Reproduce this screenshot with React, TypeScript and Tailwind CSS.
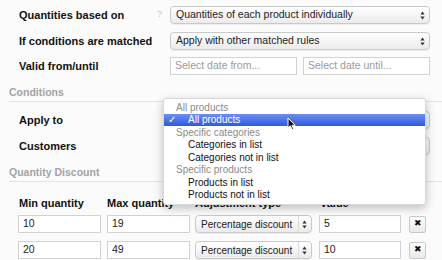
import React from "react";

const font = "font-['Liberation_Sans',Arial,sans-serif]";

const Arrows = () => (
  <svg width="5" height="9" viewBox="0 0 5 9" className="shrink-0">
    <path d="M2.5 0.5 L4.6 3.6 L0.4 3.6 Z" fill="#333" />
    <path d="M2.5 8.5 L4.6 5.4 L0.4 5.4 Z" fill="#333" />
  </svg>
);

const Select = ({ text, className = "", divider = false }: { text: string; className?: string; divider?: boolean }) => (
  <div
    className={`flex items-center h-[18px] rounded-[4px] border border-[#c9c9c9] bg-linear-to-b from-[#ffffff] to-[#ebebeb] shadow-[0_1px_1px_rgba(0,0,0,0.06)] text-[#222] ${className}`}
  >
    <span className="flex-1 pl-[5px] whitespace-nowrap overflow-hidden">{text}</span>
    <span className={`flex items-center justify-center h-full w-[12px] mr-[1px] ${divider ? "border-l border-[#dcdcdc]" : ""}`}>
      <Arrows />
    </span>
  </div>
);

const Input = ({ value, placeholder, className = "" }: { value?: string; placeholder?: string; className?: string }) => (
  <div
    className={`flex items-center h-[18px] border border-[#d2d2d2] bg-white pl-[4px] text-[10.5px] ${value ? "text-[#222]" : "text-[#9a9a9a]"} ${className}`}
  >
    {value ?? placeholder}
  </div>
);

const Label = ({ children }: { children: React.ReactNode }) => (
  <div className="text-[11px] font-bold text-[#111]">{children}</div>
);

const Section = ({ title }: { title: string }) => (
  <div className="ml-[9px] border-b border-[#e3e3e3] pb-[3px] text-[10.5px] leading-[12px] font-bold text-[#a3a3a3]">{title}</div>
);

const FormRow = ({ label, help, children, className = "" }: { label: string; help?: boolean; children: React.ReactNode; className?: string }) => (
  <div className={`grid grid-cols-[134px_17px_260px] items-center pl-[19px] ${className}`}>
    <Label>{label}</Label>
    <span className="text-[9px] text-[#c4c4c4] pl-[4px]">{help ? "?" : ""}</span>
    {children}
  </div>
);

const menuItems: { text: string; kind: "group" | "item" | "active" }[] = [
  { text: "All products", kind: "group" },
  { text: "All products", kind: "active" },
  { text: "Specific categories", kind: "group" },
  { text: "Categories in list", kind: "item" },
  { text: "Categories not in list", kind: "item" },
  { text: "Specific products", kind: "group" },
  { text: "Products in list", kind: "item" },
  { text: "Products not in list", kind: "item" },
];

const Dropdown = () => (
  <div className="absolute left-[163px] top-[98px] w-[263px] bg-white border border-[#d8d8d8] rounded-[3px] pt-[2px] pb-[3px] shadow-[0_3px_10px_rgba(0,0,0,0.25)] text-[10px]">
    {menuItems.map((m, i) => (
      <div
        key={i}
        className={`relative flex items-center h-[12.5px] ${
          m.kind === "group" ? "pl-[12px] text-[#8a8a8a]" : "pl-[24px] text-[#111]"
        } ${m.kind === "active" ? "bg-linear-to-b from-[#6c8ef3] to-[#3159d9] text-white" : ""}`}
      >
        {m.kind === "active" && <span className="absolute left-[4px] text-[10px]">✓</span>}
        {m.text}
      </div>
    ))}
  </div>
);

const Cursor = () => (
  <svg width="9" height="14" viewBox="0 0 9 14" className="absolute left-[287px] top-[117px]">
    <path d="M1 1 L1 11 L3.4 8.8 L5 12.6 L6.6 11.9 L5.1 8.3 L8.2 8.3 Z" fill="#111" stroke="#fff" strokeWidth="1" />
  </svg>
);

const DiscountRow = ({ min, max, value, className = "" }: { min: string; max: string; value: string; className?: string }) => (
  <div className={`flex items-center ${className}`}>
    <Input value={min} className="w-[83px] ml-[18px]" />
    <Input value={max} className="w-[83px] ml-[6px]" />
    <Select text="Percentage discount" divider className="w-[117px] ml-[5px] text-[10px]" />
    <Input value={value} className="w-[82px] ml-[7px]" />
    <div className="ml-[8px] flex items-center justify-center w-[17px] h-[17px] rounded-[2px] border border-[#c9c9c9] bg-linear-to-b from-white to-[#e9e9e9] text-[9px] text-[#111]">
      ✖
    </div>
  </div>
);

export default function App() {
  return (
    <div className={`relative w-[442px] h-[260px] overflow-hidden bg-[#fbfbfb] ${font}`}>
      <div className="pt-[6px]">
        <FormRow label="Quantities based on" help>
          <Select text="Quantities of each product individually" className="text-[10.5px]" />
        </FormRow>
        <FormRow label="If conditions are matched" className="mt-[8px]">
          <Select text="Apply with other matched rules" className="text-[10.5px]" />
        </FormRow>
        <FormRow label="Valid from/until" className="mt-[7px]">
          <div className="flex gap-[6px]">
            <Input placeholder="Select date from..." className="w-[127px] h-[17px]" />
            <Input placeholder="Select date until..." className="w-[127px] h-[17px]" />
          </div>
        </FormRow>

        <div className="mt-[11px]">
          <Section title="Conditions" />
        </div>
        {/* selects below sit under the open menu, only their right edge shows */}
        <FormRow label="Apply to" className="mt-[9px]">
          <Select text="" className="border-[#7a9ee0]" />
        </FormRow>
        <FormRow label="Customers" className="mt-[8px]">
          <Select text="" />
        </FormRow>

        <div className="mt-[11px]">
          <Section title="Quantity Discount" />
        </div>
        <div className="flex mt-[15px] text-[11px] leading-[12px] font-bold text-[#111]">
          <span className="ml-[19px] w-[88px]">Min quantity</span>
          <span className="w-[88px]">Max quantity</span>
          <span className="w-[125px]">Adjustment type</span>
          <span>Value</span>
        </div>
        <DiscountRow min="10" max="19" value="5" className="mt-[6px]" />
        <DiscountRow min="20" max="49" value="10" className="mt-[8px]" />
      </div>
      <Dropdown />
      <Cursor />
    </div>
  );
}
